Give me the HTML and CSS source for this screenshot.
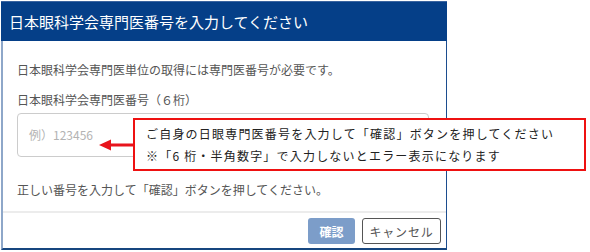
FILE: index.html
```html
<!DOCTYPE html>
<html lang="ja">
<head>
<meta charset="utf-8">
<title>専門医番号入力</title>
<link rel="stylesheet" href="styles.css">
</head>
<body>
<div class="dialog">
  <div class="header">日本眼科学会専門医番号を入力してください</div>
  <div class="content">
    <div class="body">
      <p class="lead">日本眼科学会専門医単位の取得には専門医番号が必要です。</p>
      <p class="label">日本眼科学会専門医番号（６桁）</p>
      <div class="input"><span class="placeholder">例）123456</span></div>
      <p class="note">正しい番号を入力して「確認」ボタンを押してください。</p>
    </div>
    <div class="footer">
      <span class="btn btn-ok">確認</span>
      <span class="btn btn-cancel">キャンセル</span>
    </div>
  </div>
</div>
<svg class="arrow" width="36" height="12" viewBox="0 0 36 12">
  <polygon points="0,6 12,0.5 12,11.5" fill="#e8141c"/>
  <rect x="10" y="4.5" width="26" height="3" fill="#e8141c"/>
</svg>
<div class="callout">
  <p>ご自身の日眼専門医番号を入力して「確認」ボタンを押してください</p>
  <p>※「6 桁・半角数字」で入力しないとエラー表示になります</p>
</div>
</body>
</html>
```
FILE: styles.css
```css
* { box-sizing: border-box; }
html, body { margin: 0; padding: 0; background: #fff; }
body {
  font-family: "Noto Sans CJK JP", "Noto Sans", sans-serif;
  width: 590px;
  height: 252px;
  overflow: hidden;
  position: relative;
}
p { margin: 0; }
.dialog {
  margin: 1px 0 0 1px;
  width: 446px;
}
.header {
  height: 40px;
  background: #053f88;
  border-top: 1px solid #3a64a0;
  color: #fff;
  font-size: 15px;
  line-height: 40px;
  padding-left: 8px;
  white-space: nowrap;
}
.content {
  border-left: 2px solid #8ea7c9;
  border-right: 1px solid #1c4d8f;
  border-bottom: 2px solid #17467f;
}
.body {
  padding: 20px 17px 12px 14px;
  color: #555;
  font-size: 12px;
  line-height: 18px;
}
.label { margin-top: 12px; }
.input {
  margin-top: 4px;
  height: 44px;
  border: 1px solid #cccccc;
  border-radius: 4px;
  padding-left: 11px;
  display: flex;
  align-items: center;
}
.placeholder { color: #b3b3b3; font-size: 12px; }
.note { margin-top: 24px; }
.footer {
  border-top: 2px solid #ececec;
  padding: 5px 5px 4px 0;
  display: flex;
  justify-content: flex-end;
  gap: 7px;
}
.btn {
  height: 26px;
  border-radius: 3px;
  font-size: 12px;
  display: flex;
  align-items: center;
  justify-content: center;
}
.btn-ok {
  width: 47px;
  background: #7c9dc9;
  color: #fff;
  font-weight: bold;
}
.btn-cancel {
  width: 79px;
  border: 1px solid #555;
  color: #555;
  letter-spacing: 0.8px;
}
.arrow {
  position: absolute;
  left: 99px;
  top: 139px;
}
.callout {
  position: absolute;
  left: 133px;
  top: 118px;
  width: 453px;
  height: 53px;
  border: 2px solid #ee1111;
  background: #fff;
  padding: 3px 0 0 11px;
  font-size: 12px;
  line-height: 22px;
  letter-spacing: 1.2px;
  color: #222;
  white-space: nowrap;
}
```
